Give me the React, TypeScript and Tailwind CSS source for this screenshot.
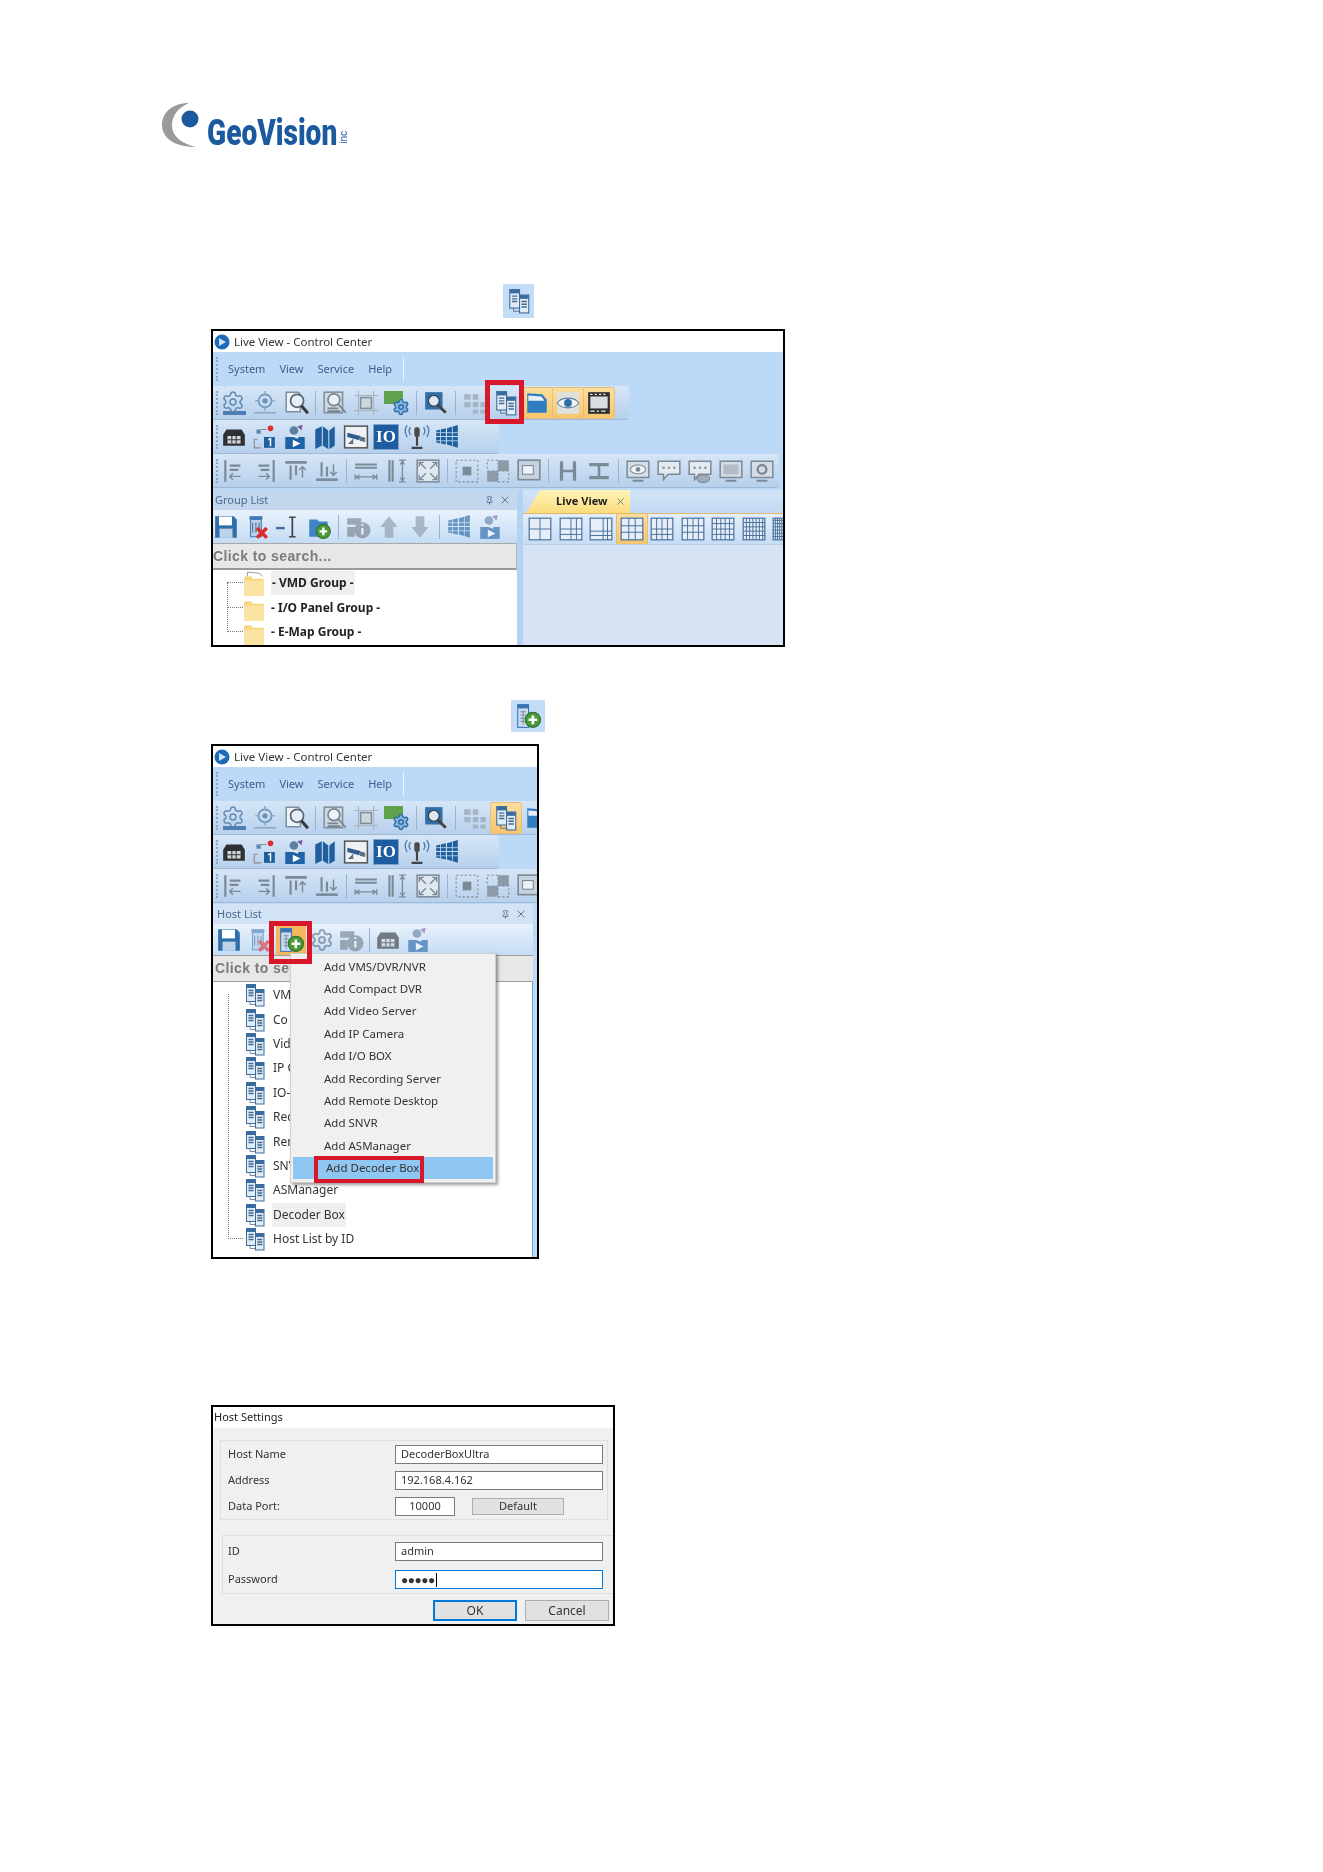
import React from "react";
import { Settings, X, Pin } from "lucide-react";

type N = React.ReactNode;
const Sv = ({ children, s = 26 }: { children: N; s?: number }) => (
  <svg width={s} height={s} viewBox="0 0 24 24" fill="none" className="shrink-0">{children}</svg>
);

const Host = ({ s = 26, c = "#3a6d9f" }: { s?: number; c?: string }) => (
  <Sv s={s}>
    <rect x="3.5" y="1.5" width="9" height="17" fill="#e3ecf5" stroke={c} />
    <rect x="3.5" y="1.5" width="9" height="3.5" fill={c} />
    <path d="M5.5 7.5h5M5.5 10h5M5.5 12.5h5" stroke="#44688f" strokeWidth="1.3" />
    <path d="M7 18.5v3h5" stroke="#667" strokeWidth="0.8" />
    <rect x="12.5" y="6.5" width="8.5" height="16.5" fill="#e3ecf5" stroke={c} />
    <rect x="12.5" y="6.5" width="8.5" height="3.5" fill={c} />
    <path d="M14.3 12.5h5M14.3 15h5M14.3 17.5h5" stroke="#44688f" strokeWidth="1.3" />
  </Sv>
);

const HostPlus = ({ s = 26 }: { s?: number }) => (
  <Sv s={s}>
    <rect x="2.5" y="1.5" width="10" height="21" fill="#cbdcee" stroke="#3a76b5" />
    <rect x="2.5" y="1.5" width="10" height="3.5" fill="#3a76b5" />
    <path d="M5 8h5M5 11h5M5 14h5M5 17h5M7.5 7v13" stroke="#7d93ab" strokeWidth="1" />
    <circle cx="16.5" cy="15.5" r="7" fill="#4a9a3a" stroke="#2f6e2a" />
    <path d="M16.5 11.5v8M12.5 15.5h8" stroke="#fff" strokeWidth="2.4" />
  </Sv>
);

const GrayPlain = ({ children }: { children: N }) => <span className="opacity-60 shrink-0">{children}</span>;

const Floppy = () => (
  <Sv>
    <path d="M2 2h17l3 3v17H2z" fill="#2f6ea8" />
    <rect x="5.5" y="2.5" width="12" height="8" fill="#fff" />
    <rect x="6" y="13.5" width="12" height="8.5" fill="#bcd3ea" />
  </Sv>
);
const Shredder = () => (
  <Sv>
    <path d="M5 2h12v3H5z" fill="#3f7ab6" />
    <rect x="6" y="5" width="10" height="16" fill="#bcd0e6" stroke="#3f7ab6" />
    <path d="M8 8v9M11 8v9M14 8v9" stroke="#3f6d9e" />
    <path d="M12 13l9 9M21 13l-9 9" stroke="#df2b2b" strokeWidth="3.2" />
  </Sv>
);
const Cursor = () => (
  <Sv>
    <path d="M1 13h8" stroke="#3f6d9e" strokeWidth="2.2" />
    <path d="M13 3h6M13 21h6M16 3v18" stroke="#444" strokeWidth="1.6" />
  </Sv>
);
const FolderPlus = () => (
  <Sv>
    <path d="M3 5h7l2 2h8v14H3z" fill="#3f84c4" />
    <circle cx="16" cy="16" r="6.5" fill="#4a9a3a" stroke="#2f6e2a" />
    <path d="M16 12.5v7M12.5 16h7" stroke="#fff" strokeWidth="2.2" />
  </Sv>
);
const GearBase = () => (
  <span className="relative block w-[26px] h-[26px] shrink-0">
    <Settings size={24} color="#5f87b0" strokeWidth={1.4} />
    <span className="absolute left-[2px] bottom-[1px] w-[23px] h-[4px] bg-[#4d7fb5]" />
  </span>
);
const Target = () => (
  <Sv>
    <circle cx="12" cy="10" r="6" stroke="#6d92b8" strokeWidth="1.5" />
    <circle cx="12" cy="10" r="2.5" fill="#6d92b8" />
    <path d="M12 1v4M12 15v4M3 10h4M17 10h4M2 21h20" stroke="#8aa8c6" strokeWidth="1.4" />
  </Sv>
);
const DocLens = () => (
  <Sv>
    <path d="M3 2h11l2 2v16H3z" fill="#eef3f8" stroke="#7f8f9f" strokeWidth="1.4" />
    <circle cx="13" cy="10" r="6" fill="#e6eff8" stroke="#596673" strokeWidth="1.6" />
    <path d="M17 14.500l6 7" stroke="#33393f" strokeWidth="2.8" />
  </Sv>
);
const GrayLens = () => (
  <Sv>
    <rect x="2" y="2" width="17" height="19" fill="#cfd8e1" stroke="#7f8f9f" strokeWidth="1.4" />
    <circle cx="11" cy="9" r="5.500" fill="#eef2f6" stroke="#79858f" strokeWidth="1.6" />
    <path d="M5 17h10M5 19.500h12M15 13l7 8" stroke="#79858f" strokeWidth="1.6" />
  </Sv>
);
const FrameIco = () => (
  <Sv>
    <path d="M1 5h22M1 19h22M5 1v22M19 1v22" stroke="#a8b4c0" strokeWidth="1" />
    <rect x="7" y="7" width="10" height="10" fill="#cdd5dd" stroke="#818d99" strokeWidth="1.400" />
  </Sv>
);
const GreenGear = () => (
  <span className="relative block w-[26px] h-[26px] shrink-0">
    <span className="absolute left-0 top-[1px] w-[19px] h-[13px] bg-[#5fa24c]" />
    <span className="absolute right-0 bottom-0">
      <Settings size={18} color="#2e6ea8" fill="#8db8de" strokeWidth={2} />
    </span>
  </span>
);
const BlueSearch = () => (
  <Sv>
    <rect x="2" y="2" width="16" height="16" fill="#2f6ea8" />
    <circle cx="10" cy="10" r="5" fill="#dce9f5" stroke="#333" />
    <path d="M14 14l7 7" stroke="#444" strokeWidth="2.6" />
  </Sv>
);
const FadedGrid = () => (
  <Sv>
    <path d="M2 4h6v5H2zM10 4h5v5h-5zM2 11h6v5H2zM10 11h5v5h-5zM17 11h5v5h-5zM10 18h5v4h-5zM17 18h5v4h-5z" fill="#a6b5c6" />
  </Sv>
);
const FolderBlue = () => (
  <Sv>
    <path d="M3 3l14 1 4 5v12H3z" fill="#2f7cc0" />
    <path d="M4 5l12 1 3 4H4z" fill="#e8f0f7" />
  </Sv>
);
const EyeTile = () => (
  <Sv>
    <rect x="2" y="2" width="20" height="20" fill="#dfe1dc" />
    <path d="M2 12c4-6 16-6 20 0-4 6-16 6-20 0z" fill="#f4f4f2" stroke="#5f7f9f" />
    <circle cx="12" cy="12" r="3.6" fill="#2f6ea8" />
  </Sv>
);
const Film = () => (
  <Sv>
    <rect x="2" y="2" width="20" height="20" fill="#2f2f2f" />
    <rect x="4" y="6" width="16" height="11" fill="#d8dde2" />
    <path d="M4 4h2M8 4h2M12 4h2M16 4h2M4 19.5h4M10 19.5h2M14 19.5h4" stroke="#eee" strokeWidth="1.2" />
  </Sv>
);
const DarkBox = () => (
  <Sv>
    <path d="M2 10l3-5h14l3 5v10H2z" fill="#2f3034" />
    <path d="M6 11h12v7H6z" fill="#d5d8da" />
    <path d="M10 11v7M14 11v7M6 14.500h12" stroke="#333" strokeWidth="1" />
  </Sv>
);
const Tile1 = () => (
  <Sv>
    <circle cx="18" cy="4" r="2.6" fill="#e02d2d" />
    <path d="M3 14v8h6M3 14h3M9 5h5" stroke="#8a8a8a" strokeWidth="1" />
    <rect x="12" y="12" width="10" height="10" fill="#1f5f9e" />
    <path d="M16 14.500l2-1v7" stroke="#fff" strokeWidth="1.4" />
    <rect x="5" y="5" width="4" height="4" fill="#5f87b0" />
  </Sv>
);
const PersonPlay = () => (
  <Sv>
    <path d="M3 12h18v11H3z" fill="#1f62a6" />
    <path d="M10 14.500l7 3.500-7 3.500z" fill="#fff" />
    <circle cx="11" cy="6" r="4" fill="#5f7f9f" />
    <path d="M14 2l5-1-1 5z" fill="#7b5aa8" />
    <path d="M7 10l8 3" stroke="#eee" strokeWidth="1.4" />
  </Sv>
);
const MapFold = () => (
  <Sv>
    <path d="M3 5l6-3v18l-6 3zM10 2l5 4v17l-5-3zM16 6l5-4v18l-5 3z" fill="#1f5f9e" />
  </Sv>
);
const Cctv = () => (
  <Sv>
    <rect x="1.500" y="2" width="21" height="20" fill="#eef2f6" stroke="#555" strokeWidth="1.400" />
    <path d="M4 8l12 3-1 4-11-3z" fill="#2f5f8f" />
    <path d="M16 12l4 1v3l-4-1zM9 14v4H5" fill="#5b6f82" stroke="#5b6f82" />
  </Sv>
);
const IoTile = () => (
  <span className="flex shrink-0 w-[26px] h-[26px] items-center justify-center bg-[#1c5c9f] border border-[#7fa5cc] text-white text-[17px] leading-none font-['Liberation_Serif',serif] font-bold">IO</span>
);
const MicWave = () => (
  <Sv>
    <rect x="9.500" y="3" width="5" height="9" rx="2" fill="#4a4a4a" />
    <path d="M12 12v8M7 22h10" stroke="#444" strokeWidth="2" />
    <path d="M6 3c-1.500 2-1.500 5 0 7M3 1c-2.500 3-2.500 8 0 11M18 3c1.500 2 1.500 5 0 7M21 1c2.500 3 2.500 8 0 11" stroke="#4f80b0" strokeWidth="1.300" />
  </Sv>
);
const WinTile = () => (
  <Sv>
    <path d="M2 6l9-2v7H2zM12 4l10-3v10H12zM2 12h9v7l-9-2zM12 12h10v10l-10-3z" fill="#1f5f9e" />
    <path d="M6 4v15M17 2v18M2 8h20M2 15.500h20" stroke="#bcd3ea" strokeWidth="0.8" />
  </Sv>
);

const GS = "#7b8a99";
const AlignL = ({ flip }: { flip?: boolean }) => (
  <span className={`shrink-0 block ${flip ? "-scale-x-100" : ""}`}>
    <Sv>
      <path d="M4 2v20" stroke={GS} strokeWidth="2" />
      <path d="M8 7h10M8 11h8" stroke={GS} strokeWidth="2" />
      <path d="M18 17H8m3-3-3 3 3 3" stroke={GS} strokeWidth="1.300" />
    </Sv>
  </span>
);
const AlignT = ({ flip }: { flip?: boolean }) => (
  <span className={`shrink-0 block ${flip ? "-scale-y-100" : ""}`}>
    <Sv>
      <path d="M2 4h20" stroke={GS} strokeWidth="2.400" />
      <path d="M7 7v13M12 7v9" stroke={GS} strokeWidth="2" />
      <path d="M18 18V8m-3 3 3-3 3 3" stroke={GS} strokeWidth="1.300" />
    </Sv>
  </span>
);
const SpanH = () => (
  <Sv>
    <path d="M2 6h20M2 9h20" stroke={GS} strokeWidth="2" />
    <path d="M2 15v5M22 15v5M3 17.500h18M6 15.500l-3 2 3 2M18 15.500l3 2-3 2" stroke={GS} strokeWidth="1.200" />
  </Sv>
);
const SpanV = () => (
  <Sv>
    <path d="M5 2v20M8 2v20" stroke={GS} strokeWidth="2" />
    <path d="M14 2h6M14 22h6M17 3v18M15 6l2-3 2 3M15 18l2 3 2-3" stroke={GS} strokeWidth="1.200" />
  </Sv>
);
const Expand = () => (
  <Sv>
    <rect x="2" y="2" width="20" height="20" stroke={GS} strokeWidth="1.400" fill="#dfe7ef" />
    <path d="M4 4l6 6M20 4l-6 6M4 20l6-6M20 20l-6-6M4 8V4h4M20 8V4h-4M4 16v4h4M20 16v4h-4" stroke={GS} strokeWidth="1.300" />
  </Sv>
);
const Stat = ({ kind }: { kind: "eye" | "chat" | "eyechat" | "mon" | "rot" }) => (
  <Sv>
    {kind === "chat" || kind === "eyechat" ? (
      <>
        <path d="M2 3h20v12H11l-4 5v-5H2z" fill="#e4eaf0" stroke={GS} strokeWidth="1.400" />
        <path d="M6 9h2M11 9h2M16 9h2" stroke={GS} strokeWidth="2" />
        {kind === "eyechat" && <ellipse cx="15" cy="19" rx="6" ry="3.500" fill="#a2adb8" stroke={GS} />}
      </>
    ) : (
      <>
        <rect x="2" y="3" width="20" height="15" fill="#d6dde5" stroke={GS} strokeWidth="1.400" />
        <path d="M7 21h10" stroke={GS} strokeWidth="2" />
        {kind === "eye" && <ellipse cx="12" cy="10.500" rx="7" ry="4" fill="#f1f4f7" stroke={GS} />}
        {kind === "eye" && <circle cx="12" cy="10.500" r="2.200" fill={GS} />}
        {kind === "mon" && <rect x="5" y="6" width="14" height="9" fill="#b2bcc6" />}
        {kind === "rot" && <circle cx="12" cy="10.500" r="4" stroke={GS} strokeWidth="2.200" />}
      </>
    )}
  </Sv>
);
const InfoGray = () => (
  <Sv>
    <path d="M2 4h13v6H2zM2 12h7v9H2z" fill="#6f7b87" />
    <circle cx="16" cy="15" r="7.500" fill="#6f7b87" />
    <path d="M16 13v6M16 9.500v1.500" stroke="#eef2f6" strokeWidth="2.200" />
  </Sv>
);
const ArrowSolid = ({ up }: { up?: boolean }) => (
  <Sv>
    <path d={up ? "M12 2l8 10h-4v10H8V12H4z" : "M12 22l8-10h-4V2H8v10H4z"} fill="#8996a3" />
  </Sv>
);

const g = (node: N) => <GrayPlain>{node}</GrayPlain>;

const Sep = () => <span className="w-px h-[24px] bg-[#9db3cb] mx-[1px] shrink-0" />;
const Hi = ({ children }: { children: N }) => (
  <span className="flex items-center justify-center w-[32px] h-[32px] -mx-[3px] rounded-[2px] border border-[#e6be7c] bg-gradient-to-b from-[#fbdf9d] to-[#f5c56e] shrink-0">{children}</span>
);
const Grip = ({ cls = "-mr-[3px]" }: { cls?: string }) => <span className={`w-[3px] h-[24px] shrink-0 border-l-2 border-dotted border-[#8ea8c4] ${cls}`} />;

const Bar = ({ children, w, gap = "gap-[5px]" }: { children: N; w: string; gap?: string }) => (
  <div className={`flex items-center h-[34px] pl-[3px] rounded-r-[3px] bg-gradient-to-b from-[#d6e6f7] to-[#b7d0ec] border-b border-[#9fb8d3] overflow-hidden ${w} ${gap}`}>
    <Grip />
    {children}
  </div>
);

const MenuBar = ({ w }: { w: string }) => (
  <div className={`flex items-center h-[34px] pl-[3px] text-[11px] text-[#3f5e8c] ${w}`}>
    <Grip cls="mr-[2px]" />
    <div className="flex items-center gap-[14px] ml-[7px] pr-[11px] h-[24px] border-r border-[#eef4fb]">
      <span>System</span><span>View</span><span>Service</span><span>Help</span>
    </div>
  </div>
);

const TitleBar = () => (
  <div className="flex items-center h-[21px] bg-white pl-[1px] gap-[4px] text-[11.5px] text-[#333]">
    <svg width="16" height="16" viewBox="0 0 16 16" className="shrink-0">
      <circle cx="8" cy="8" r="7.500" fill="#1d6bb8" />
      <path d="M5 4l7 4-7 4z" fill="#c9e4f8" />
    </svg>
    <span>Live View - Control Center</span>
  </div>
);

const Tb1 = ({ short }: { short?: boolean }) => (
  <>
    <GearBase />
    <Target />
    <DocLens />
    <Sep />
    <GrayLens />
    <FrameIco />
    <GreenGear />
    <Sep />
    <BlueSearch />
    <Sep />
    <FadedGrid />
    {short ? <Hi><Host /></Hi> : <Host />}
    {short ? <FolderBlue /> : (
      <>
        <Hi><FolderBlue /></Hi>
        <Hi><EyeTile /></Hi>
        <Hi><Film /></Hi>
      </>
    )}
  </>
);

const Tb2 = () => (
  <>
    <DarkBox /><Tile1 /><PersonPlay /><MapFold /><Cctv /><IoTile /><MicWave /><WinTile />
  </>
);

const Tb3 = ({ short }: { short?: boolean }) => (
  <>
    <AlignL /><AlignL flip /><AlignT /><AlignT flip />
    <Sep />
    <SpanH /><SpanV /><Expand />
    <Sep />
    <Sv><rect x="2" y="2" width="20" height="20" stroke={GS} strokeDasharray="2 2" /><rect x="8" y="8" width="8" height="8" fill={GS} /></Sv>
    <Sv><path d="M2 2h10v10H2z" stroke={GS} strokeDasharray="2 2" /><path d="M12 2h10v10H12zM2 12h10v10H2z" fill="#8e9aa6" /><path d="M12 12h10v10H12z" stroke={GS} strokeDasharray="2 2" /></Sv>
    <Sv><rect x="2" y="2" width="20" height="18" fill="#c7d2dd" stroke={GS} strokeWidth="1.500" /><rect x="6" y="7" width="10" height="8" fill="#eef2f6" stroke={GS} /></Sv>
    {!short && (
      <>
        <Sep />
        <Sv><path d="M6 3v18M18 3v18" stroke={GS} strokeWidth="3" /><path d="M6 12h12" stroke={GS} strokeWidth="2.400" /></Sv>
        <Sv><path d="M3 6h18M3 18h18" stroke={GS} strokeWidth="3" /><path d="M12 6v12" stroke={GS} strokeWidth="2.400" /></Sv>
        <Sep />
        <Stat kind="eye" /><Stat kind="chat" /><Stat kind="eyechat" /><Stat kind="mon" /><Stat kind="rot" />
      </>
    )}
  </>
);

const PaneHead = ({ title, w }: { title: string; w: string }) => (
  <div className={`flex items-center justify-between h-[20px] pl-[2px] pr-[6px] bg-[#c3d7ee] text-[11px] text-[#4e6a8f] ${w}`}>
    <span>{title}</span>
    <span className="flex items-center gap-[5px] text-[#45607f]"><Pin size={9} strokeWidth={2} /><X size={12} strokeWidth={1.6} /></span>
  </div>
);

const PaneTools = ({ children }: { children: N }) => (
  <div className="flex items-center gap-[5px] h-[33px] bg-gradient-to-b from-[#e8f2fc] to-[#c5dcf4]">{children}</div>
);

const SearchBox = ({ text }: { text: string }) => (
  <div className="flex items-center h-[27px] bg-[#e7e7e7] border-t border-[#a8a8a8] border-b-2 border-b-[#9a9a9a] border-r border-r-[#b5b5b5] text-[14px] font-['Liberation_Sans',sans-serif] font-bold tracking-[0.4px] text-[#7b7b7b]">
    {text}
  </div>
);

const FolderY = ({ open }: { open?: boolean }) => (
  <Sv s={26}>
    {open && <path d="M5 6V2l11 1 3 3" stroke="#8d8d8d" strokeWidth="0.8" />}
    <path d="M2 6h7l1 2h10v16H2z" fill="#f7d883" />
    <path d="M2 10h18v14H2z" fill="#fbe3a3" />
  </Sv>
);

const GridIcon = ({ v, h }: { v: number[]; h: number[] }) => (
  <Sv s={26}>
    <rect x="2" y="2" width="20" height="20" fill="#e6eff9" stroke="#4a6f9c" strokeWidth="1.100" />
    {v.map((x) => <path key={`v${x}`} d={`M${x} 2V22`} stroke="#4a6f9c" strokeWidth="0.9" />)}
    {h.map((y) => <path key={`h${y}`} d={`M2 ${y}H22`} stroke="#4a6f9c" strokeWidth="0.9" />)}
  </Sv>
);

const Panel1 = () => (
  <div className="relative ml-[211px] mt-[11px] w-[574px] h-[318px] border-2 border-black overflow-hidden bg-[#bcd9f8] blur-[0.35px]">
    <TitleBar />
    <MenuBar w="w-full" />
    <Bar w="w-[416px]"><Tb1 /></Bar>
    <Bar w="w-[286px]" gap="gap-[4.5px]"><Tb2 /></Bar>
    <Bar w="w-[566px]"><Tb3 /></Bar>
    <div className="flex h-[160px] pt-[2px]">
      <div className="flex flex-col w-[304px] shrink-0">
        <PaneHead title="Group List" w="w-full" />
        <PaneTools>
          <Floppy /><Shredder /><Cursor /><FolderPlus /><Sep />
          {g(<InfoGray />)}{g(<ArrowSolid up />)}{g(<ArrowSolid />)}
          <Sep />
          {g(<WinTile />)}{g(<PersonPlay />)}
        </PaneTools>
        <SearchBox text="Click to search..." />
        <div className="relative flex-1 bg-white text-[12px] text-[#222] font-bold pl-[29px] pt-[1px] overflow-hidden">
          <span className="absolute left-[14px] top-[12px] w-[16px] h-[50px] border-l border-b border-dotted border-[#777]" />
          <span className="absolute left-[14px] top-[12px] w-[16px] border-t border-dotted border-[#777]" />
          <span className="absolute left-[14px] top-[37px] w-[16px] border-t border-dotted border-[#777]" />
          {[
            ["- VMD Group -", true],
            ["- I/O Panel Group -", false],
            ["- E-Map Group -", false],
          ].map(([t, open]) => (
            <div key={String(t)} className="flex items-center gap-[3px] h-[24.500px]">
              <FolderY open={!!open} />
              <span className={open ? "bg-[#efefef] px-[1px] leading-[24px]" : ""}>{t}</span>
            </div>
          ))}
        </div>
      </div>
      <div className="w-[6px] bg-[#b5d2f2] shrink-0" />
      <div className="flex flex-col flex-1 bg-[#d6e3f2] min-w-0">
        <div className="flex h-[23px] bg-gradient-to-b from-[#d1e3f7] to-[#c3daf4] pl-[3px]">
          <div className="flex items-center gap-[7px] pl-[30px] pr-[5px] w-[104px] bg-gradient-to-b from-[#fff3b8] to-[#fbdc7c] text-[11px] font-bold text-[#222] [clip-path:polygon(14px_0,100%_0,100%_100%,0_100%)]">
            <span>Live</span><span className="-ml-[4px]">View</span>
            <X size={11} color="#45607f" strokeWidth={1.6} className="shrink-0" />
          </div>
        </div>
        <div className="flex items-center gap-[4.500px] h-[32px] pl-[4px] border-y border-[#e3b969] border-b-[#b9cfe8] bg-gradient-to-b from-[#e3effb] to-[#c7ddf5] overflow-hidden">
          <GridIcon v={[12]} h={[12]} />
          <GridIcon v={[12, 17]} h={[12, 17]} />
          <GridIcon v={[14, 18]} h={[14, 18]} />
          <Hi><GridIcon v={[9, 15]} h={[9, 15]} /></Hi>
          <GridIcon v={[7, 12, 17]} h={[12, 17]} />
          <GridIcon v={[7, 12, 17]} h={[9, 15]} />
          <GridIcon v={[6, 10, 14, 18]} h={[7, 12, 17]} />
          <GridIcon v={[5, 8, 11, 14, 17, 20]} h={[6, 10, 14, 18]} />
          <GridIcon v={[4, 6, 8, 10, 12, 14, 16, 18, 20]} h={[4, 7, 10, 13, 16, 19]} />
        </div>
      </div>
    </div>
    <span className="absolute left-[272px] top-[49px] w-[39px] h-[44px] border-[5px] border-[#d8182a]" />
  </div>
);

const hosts = ["VMS", "Co", "Vid", "IP C", "IO-", "Rec", "Ren", "SNV", "ASManager", "Decoder Box", "Host List by ID"];
const menu = [
  "Add VMS/DVR/NVR", "Add Compact DVR", "Add Video Server", "Add IP Camera", "Add I/O BOX",
  "Add Recording Server", "Add Remote Desktop", "Add SNVR", "Add ASManager", "Add Decoder Box",
];

const Panel2 = () => (
  <div className="relative ml-[211px] mt-[12px] w-[328px] h-[515px] border-2 border-black overflow-hidden bg-[#bcd9f8] blur-[0.35px]">
    <TitleBar />
    <MenuBar w="w-full" />
    <Bar w="w-full"><Tb1 short /></Bar>
    <Bar w="w-[286px]" gap="gap-[4.5px]"><Tb2 /></Bar>
    <Bar w="w-full"><Tb3 short /></Bar>
    <div className="flex flex-col pr-[4px] pt-[1px]">
      <div className="flex items-center justify-between h-[20px] pl-[4px] pr-[6px] bg-[#d2e3f6] text-[11px] text-[#4e6a8f]">
        <span>Host List</span>
        <span className="flex items-center gap-[5px] text-[#45607f]"><Pin size={9} strokeWidth={2} /><X size={12} strokeWidth={1.6} /></span>
      </div>
      <div className="flex items-center gap-[4px] h-[31px] pl-[3px] bg-gradient-to-b from-[#e8f2fc] to-[#c5dcf4]">
        <Floppy />
        {g(<Shredder />)}
        <span className="flex items-center justify-center w-[30px] h-[30px] bg-[#f4b95f] shrink-0"><HostPlus /></span>
        {g(<Settings size={24} color="#5f6f80" />)}
        {g(<InfoGray />)}
        <Sep />
        {g(<DarkBox />)}
        {g(<PersonPlay />)}
      </div>
      <div className="flex items-center h-[27px] pl-[2px] bg-[#e7e7e7] border-y border-[#a0a0a0] text-[14px] font-['Liberation_Sans',sans-serif] font-bold tracking-[0.4px] text-[#7b7b7b]">Click to sea</div>
      <div className="relative bg-white border-r border-[#6ea0d6] h-[287px] pl-[30px] pt-[1px] text-[12px] text-[#333]">
        <span className="absolute left-[15px] top-[12px] w-[15px] h-[245px] border-l border-b border-dotted border-[#777]" />
        {hosts.map((t, i) => (
          <div key={t} className="flex items-center gap-[6px] h-[24.400px]">
            <Host s={24} />
            <span className={i === 9 ? "bg-[#efefef] px-[1px] leading-[24px] -ml-[1px]" : ""}>{t}</span>
          </div>
        ))}
      </div>
    </div>
    <div className="absolute left-[77px] top-[207px] w-[206px] h-[230px] bg-[#f0f0f0] border border-[#cfcfcf] shadow-[2px_2px_3px_rgba(0,0,0,0.4)] pt-[1px] text-[11.500px] text-[#333] flex flex-col">
      {menu.map((m, i) => (
        <div key={m} className={`flex items-center h-[22.400px] pl-[33px] ${i === 9 ? "bg-[#90c6f2] mx-[2px] pl-[31px]" : ""}`}>{m}</div>
      ))}
    </div>
    <span className="absolute left-[56px] top-[175px] w-[43px] h-[43px] border-[5px] border-[#d8182a]" />
    <span className="absolute left-[101px] top-[410px] w-[110px] h-[27px] border-[4px] border-[#d8182a]" />
  </div>
);

const Field = ({ label, value, long = true, children }: { label: string; value: N; long?: boolean; children?: N }) => (
  <div className="flex items-center">
    <span className="w-[167px] shrink-0">{label}</span>
    <div className={`flex items-center h-[19px] bg-white border border-[#7a7a7a] ${long ? "w-[208px] pl-[5px]" : "w-[60px] justify-center"}`}>{value}</div>
    {children}
  </div>
);

const Panel3 = () => (
  <div className="ml-[211px] mt-[146px] w-[404px] h-[221px] border-2 border-black bg-[#f0f0f0] text-[11px] text-[#333] overflow-hidden blur-[0.25px]">
    <div className="flex items-center h-[21px] bg-white pl-[1px] text-[#222]">Host Settings</div>
    <div className="ml-[7px] mt-[12px] w-[388px] h-[80px] border border-[#dfdfdf] pl-[7px] pt-[4px] flex flex-col gap-[7px]">
      <Field label="Host Name" value="DecoderBoxUltra" />
      <Field label="Address" value="192.168.4.162" />
      <Field label="Data Port:" value="10000" long={false}>
        <span className="flex items-center justify-center ml-[17px] w-[92px] h-[17px] bg-[#e1e1e1] border border-[#adadad]">Default</span>
      </Field>
    </div>
    <div className="ml-[9px] mt-[15px] w-[392px] h-[59px] border border-r-0 border-[#dfdfdf] pl-[5px] pt-[6px] flex flex-col gap-[9px]">
      <Field label="ID" value="admin" />
      <div className="flex items-center">
        <span className="w-[167px] shrink-0">Password</span>
        <div className="flex items-center h-[19px] w-[208px] pl-[5px] bg-white border border-[#0078d7]">
          <span className="text-[12px] tracking-[-0.5px]">●●●●●</span>
          <span className="w-px h-[14px] bg-black ml-[1px]" />
        </div>
      </div>
    </div>
    <div className="flex justify-end gap-[8px] mt-[6px] pr-[4px] text-[12px]">
      <span className="flex items-center justify-center w-[84px] h-[21px] bg-[#e1e1e1] border-2 border-[#0078d7]">OK</span>
      <span className="flex items-center justify-center w-[84px] h-[21px] bg-[#e1e1e1] border border-[#adadad]">Cancel</span>
    </div>
  </div>
);

const Logo = () => (
  <div className="flex items-end ml-[162px] mt-[102px] h-[46px]">
    <svg width="44" height="46" viewBox="0 0 44 46" className="shrink-0">
      <path d="M27 1C10 1 0 11 0 23c0 12 11 22 34 22-14-3-24-11-24-21C10 13 16 6 27 1z" fill="#9a9a9a" />
      <circle cx="28" cy="17" r="8.500" fill="#1b5a9e" />
    </svg>
    <span className="ml-[1px] origin-left scale-x-[0.78] text-[36px] leading-[30px] font-black text-[#1b5a9e] font-['Roboto',sans-serif]">GeoVision</span>
    <span className="-ml-[35px] mb-[4px] text-[10px] leading-none text-[#1b5a9e] font-['Liberation_Sans',sans-serif] [writing-mode:vertical-rl] rotate-180">inc</span>
  </div>
);

export default function App() {
  return (
    <div className="w-[1323px] h-[1872px] bg-white overflow-hidden font-['Noto_Sans','Open_Sans',sans-serif]">
      <Logo />
      <div className="ml-[503px] mt-[136px] flex items-center justify-center w-[31px] h-[34px] bg-[#c3dcf7] blur-[0.3px]"><Host /></div>
      <Panel1 />
      <div className="ml-[511px] mt-[53px] flex items-center justify-center w-[34px] h-[32px] bg-[#c3dcf7] blur-[0.3px]"><HostPlus /></div>
      <Panel2 />
      <Panel3 />
    </div>
  );
}
